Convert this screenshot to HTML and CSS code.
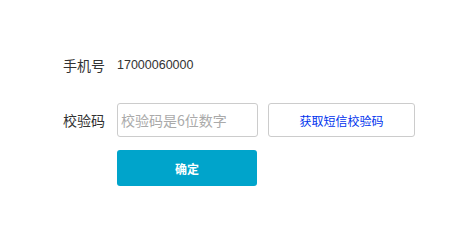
FILE: index.html
```html
<!DOCTYPE html>
<html lang="zh-CN">
<head>
<meta charset="utf-8">
<title>验证手机</title>
<link rel="stylesheet" href="styles.css">
</head>
<body>
<div class="form">
  <div class="row row-phone">
    <span class="label">手机号</span>
    <span class="phone">17000060000</span>
  </div>
  <div class="row row-code">
    <span class="label">校验码</span>
    <input class="code-input" type="text" placeholder="校验码是6位数字">
    <button class="sms-btn" type="button">获取短信校验码</button>
  </div>
  <div class="row row-submit">
    <button class="submit-btn" type="button">确定</button>
  </div>
</div>
</body>
</html>
```
FILE: styles.css
```css
html, body {
  margin: 0;
  padding: 0;
  background: #fff;
}
body {
  font-family: "Liberation Sans", "Noto Sans CJK SC", sans-serif;
  color: #333;
}
.form {
  padding: 50px 0 0 63px;
}
.row {
  display: flex;
  align-items: center;
}
.row-phone {
  height: 30px;
}
.row-code {
  margin-top: 23px;
  height: 34px;
}
.row-submit {
  margin-top: 13px;
  padding-left: 54px;
}
.label {
  width: 54px;
  font-size: 14px;
  color: #333;
  font-family: "Noto Sans CJK SC", sans-serif;
}
.phone {
  font-size: 12.5px;
  color: #333;
}
.code-input {
  box-sizing: border-box;
  width: 141px;
  height: 34px;
  margin: 0;
  padding: 0 3px;
  border: 1px solid #ccc;
  border-radius: 3px;
  font-size: 14px;
  font-family: "Noto Sans CJK SC", sans-serif;
  color: #333;
  outline: none;
}
.code-input::placeholder {
  color: #aaa;
}
.sms-btn {
  box-sizing: border-box;
  width: 147px;
  height: 34px;
  margin: 0 0 0 10px;
  padding: 0;
  border: 1px solid #ccc;
  border-radius: 3px;
  background: #fff;
  color: #0033ee;
  font-size: 12px;
  font-family: "Noto Sans CJK SC", sans-serif;
  cursor: pointer;
}
.submit-btn {
  box-sizing: border-box;
  width: 140px;
  height: 36px;
  margin: 0;
  padding: 0;
  border: none;
  border-radius: 3px;
  background: #00a4cb;
  color: #fff;
  font-size: 12px;
  font-weight: bold;
  font-family: "Noto Sans CJK SC", sans-serif;
  cursor: pointer;
}
```
